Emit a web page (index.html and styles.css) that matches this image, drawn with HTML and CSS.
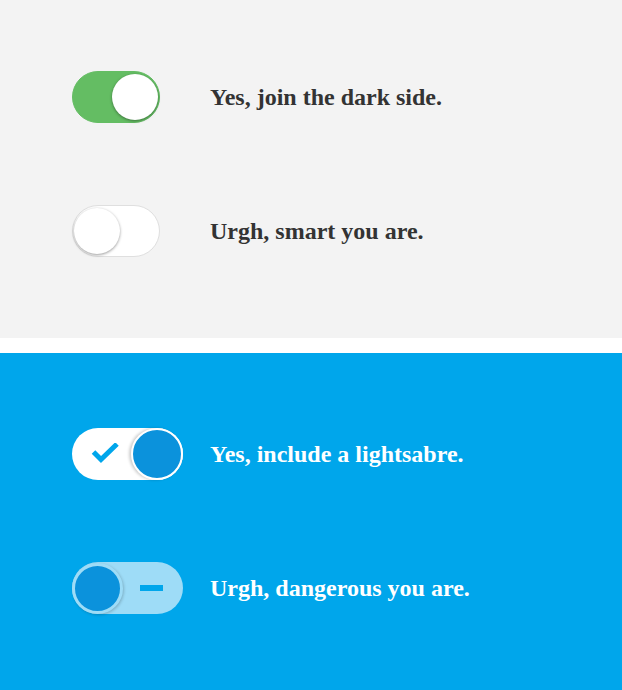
FILE: index.html
```html
<!DOCTYPE html>
<html>
<head>
<meta charset="utf-8">
<link rel="stylesheet" href="styles.css">
</head>
<body>
<section class="panel panel-light">
  <div class="row">
    <div class="ctrl"><span class="sw sw-on"><span class="knob"></span></span></div>
    <span class="label">Yes, join the dark side.</span>
  </div>
  <div class="row">
    <div class="ctrl"><span class="sw sw-off"><span class="knob"></span></span></div>
    <span class="label">Urgh, smart you are.</span>
  </div>
</section>
<section class="panel panel-blue">
  <div class="row">
    <div class="ctrl">
      <span class="bsw bsw-on">
        <svg class="icon" width="30" height="22" viewBox="0 0 30 22"><path d="M2.5 9 L10 16.5 L26 1" fill="none" stroke="#00a6eb" stroke-width="5"/></svg>
        <span class="bknob"></span>
      </span>
    </div>
    <span class="label">Yes, include a lightsabre.</span>
  </div>
  <div class="row">
    <div class="ctrl">
      <span class="bsw bsw-off">
        <span class="bknob"></span>
        <span class="minus"></span>
      </span>
    </div>
    <span class="label">Urgh, dangerous you are.</span>
  </div>
</section>
</body>
</html>
```

FILE: styles.css
```css
html, body { margin: 0; padding: 0; }
body { background: #fff; font-family: "Liberation Serif", "Times New Roman", serif; }

.panel {
  display: flex;
  flex-direction: column;
  gap: 82px;
  padding-left: 72px;
}
.panel-light {
  background: #f3f3f3;
  padding-top: 71px;
  padding-bottom: 82px;
  height: 338px;
  box-sizing: border-box;
  margin-bottom: 15px;
}
.panel-blue {
  background: #00a6eb;
  padding-top: 75px;
  height: 337px;
  box-sizing: border-box;
}

.row {
  display: grid;
  grid-template-columns: 138px auto;
  align-items: center;
  height: 52px;
}
.label {
  font-weight: bold;
  font-size: 24px;
  color: #333;
}
.panel-blue .label { color: #fff; }

.ctrl { display: flex; align-items: center; }

.sw {
  position: relative;
  display: block;
  width: 88px;
  height: 52px;
  border-radius: 26px;
  box-sizing: border-box;
}
.sw-on {
  background: #64bd63;
  border: 1px solid #64bd63;
}
.sw-off {
  background: #fff;
  border: 1px solid #dfdfdf;
}
.knob {
  position: absolute;
  top: 2px;
  width: 46px;
  height: 46px;
  border-radius: 50%;
  background: #fff;
  box-shadow: 0 1px 3px rgba(0,0,0,0.4);
}
.sw-on .knob { right: 1px; }
.sw-off .knob { left: 1px; }

.bsw {
  display: flex;
  align-items: center;
  width: 111px;
  height: 52px;
  border-radius: 26px;
  box-sizing: border-box;
}
.bsw-on {
  background: #fff;
  justify-content: space-between;
  padding-left: 19px;
}
.bsw-off {
  background: #9edcf7;
}
.bknob {
  width: 52px;
  height: 52px;
  box-sizing: border-box;
  border-radius: 50%;
  background: #0b92dc;
}
.bsw-on .bknob {
  border: 2px solid #fff;
  box-shadow: -2px 0 3px rgba(0,0,0,0.2);
}
.bsw-off .bknob {
  width: 51px;
  height: 51px;
  border: 3px solid #9edcf7;
  box-shadow: 1px 1px 3px rgba(0,0,0,0.2);
}
.icon { display: block; margin-top: 0; }
.minus {
  width: 23px;
  height: 6px;
  background: #00a6eb;
  margin-left: 17px;
}
```
